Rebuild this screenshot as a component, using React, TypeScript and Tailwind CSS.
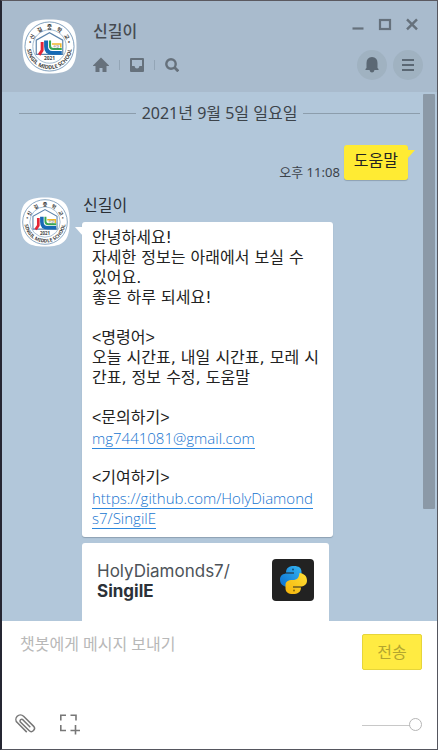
import React from "react";

function SchoolEmblem({ id, className }: { id: string; className: string }) {
  return (
    <svg viewBox="0 0 56 56" className={className} role="img" aria-label="신길중학교">
      <defs>
        <path id={`${id}-top`} d="M9.5 29 A18.5 18.5 0 0 1 46.5 29" />
        <path id={`${id}-bottom`} d="M5 28 A23 23 0 0 0 51 28" />
      </defs>
      <path
        d="M28 0.500C49 0.500 55.500 7 55.500 28S49 55.500 28 55.500S0.500 49 0.500 28S7 0.500 28 0.500Z"
        fill="#fff"
      />
      <circle cx="28" cy="28" r="25" fill="none" stroke="#6f93b5" strokeWidth="0.900" />
      <circle cx="28" cy="28" r="17" fill="none" stroke="#8aa9c6" strokeWidth="0.800" />
      <path d="M14.500 36V21.500L28 14L41.500 21.500V36Z" fill="#fff" stroke="#5b83ab" strokeWidth="1.200" />
      <path d="M17.500 36.500L20.500 32V23.500" fill="none" stroke="#e32636" strokeWidth="3" />
      <path d="M24.500 22V28Q24.500 34.500 31 34.500H40.500" fill="none" stroke="#1769b5" strokeWidth="4" />
      <path d="M28.500 22V27.500Q28.500 30.500 32 30.500H40.500" fill="none" stroke="#36a853" strokeWidth="2.200" />
      <path d="M30.500 25.500H39.500V29" fill="none" stroke="#efb72d" strokeWidth="1.600" />
      <text x="35" y="29.500" textAnchor="middle" fontSize="3.500" fill="#555">신길</text>
      <text x="28" y="42" textAnchor="middle" fontSize="5" fontWeight="700" fill="#444">2021</text>
      <text fontSize="5.500" fontWeight="700" fill="#333">
        <textPath href={`#${id}-top`} startOffset="50%" textAnchor="middle">
          {"•\u00a0신\u00a0\u00a0\u00a0길\u00a0\u00a0\u00a0중\u00a0\u00a0\u00a0학\u00a0\u00a0\u00a0교\u00a0•"}
        </textPath>
      </text>
      <text fontSize="5.500" fontWeight="700" fill="#444">
        <textPath href={`#${id}-bottom`} startOffset="50%" textAnchor="middle">SINGIL MIDDLE SCHOOL</textPath>
      </text>
    </svg>
  );
}

function PythonMark() {
  const half =
    "M14 14C14 8.500 17.500 7 22 7C27 7 29.500 9 29.500 13V16C29.500 19.500 27 21 22.500 21C17.500 21 16 23.500 15.500 28C11 27.500 8 25 8 20.500C8 16.500 11 14.500 15 14.500H22V13.500H14Z";
  return (
    <svg viewBox="0 0 42 42" className="size-[42px] shrink-0" role="img" aria-label="Python">
      <defs>
        <linearGradient id="py-blue" x1="0" y1="1" x2="1" y2="0">
          <stop offset="0" stopColor="#0a6fd0" />
          <stop offset="1" stopColor="#35b5f2" />
        </linearGradient>
        <linearGradient id="py-yellow" x1="0" y1="1" x2="1" y2="0">
          <stop offset="0" stopColor="#ffdf35" />
          <stop offset="1" stopColor="#f5b30b" />
        </linearGradient>
      </defs>
      <rect width="42" height="42" rx="4" fill="#222" />
      <path d={half} fill="url(#py-blue)" />
      <path d={half} fill="url(#py-yellow)" transform="rotate(180 21.500 21)" />
      <circle cx="21" cy="10.500" r="1" fill="#13507f" />
      <circle cx="22" cy="31.500" r="1" fill="#8b6c08" />
    </svg>
  );
}

function IconButton({ label, className = "", children }: { label: string; className?: string; children: React.ReactNode }) {
  return (
    <button type="button" aria-label={label} className={`flex items-center justify-center ${className}`}>
      {children}
    </button>
  );
}

function Header() {
  return (
    <header className="flex h-[91px] shrink-0 justify-between bg-[#a9bbcd] pl-5 text-[#66717c]">
      <div className="flex pt-[18px]">
        <SchoolEmblem id="header" className="size-[55px]" />
        <div className="ml-4">
          <h1 className="text-base leading-6 font-medium text-[#464b52]">신길이</h1>
          <nav className="mt-3 flex h-5 items-center">
            <IconButton label="홈" className="size-4">
              <svg viewBox="0 0 16 16" className="size-4" fill="currentColor">
                <path d="M8 0.500L0 8.500V9H2.500V15H6.500V11H9.500V15H13.500V9H16V8.500Z" />
              </svg>
            </IconButton>
            <span className="mx-[10px] h-[10px] w-px bg-[#93a5b6]" />
            <IconButton label="보관함" className="size-[14px]">
              <svg viewBox="0 0 14 14" className="size-[14px]" fill="currentColor">
                <path
                  fillRule="evenodd"
                  d="M1 0H13Q14 0 14 1V13Q14 14 13 14H1Q0 14 0 13V1Q0 0 1 0ZM2 2V8H4.500Q5 10.500 7 10.500T9.500 8H12V2Z"
                />
              </svg>
            </IconButton>
            <span className="mx-[10px] h-[10px] w-px bg-[#93a5b6]" />
            <IconButton label="검색" className="size-[14px]">
              <svg viewBox="0 0 14 14" className="size-[14px]" fill="none" stroke="currentColor" strokeWidth="2.400">
                <circle cx="6" cy="6" r="4.700" />
                <path d="M9.300 9.300L13.300 13.300" strokeWidth="2.800" />
              </svg>
            </IconButton>
          </nav>
        </div>
      </div>
      <div className="flex flex-col items-end pt-4 pr-[14px]">
        <div className="mr-[5px] flex gap-[14px]">
          <IconButton label="최소화" className="h-4 w-3">
            <svg viewBox="0 0 12 16" className="h-4 w-3">
              <path d="M0.500 11.500H11.500" stroke="currentColor" strokeWidth="2.200" />
            </svg>
          </IconButton>
          <IconButton label="최대화" className="h-4 w-[14px]">
            <svg viewBox="0 0 14 16" className="h-4 w-[14px]">
              <rect x="2" y="3" width="10" height="9" fill="none" stroke="currentColor" strokeWidth="2.200" />
            </svg>
          </IconButton>
          <IconButton label="닫기" className="h-4 w-3">
            <svg viewBox="0 0 12 16" className="h-4 w-3">
              <path d="M1 2.300L11 12.300M11 2.300L1 12.300" stroke="currentColor" strokeWidth="2.400" />
            </svg>
          </IconButton>
        </div>
        <div className="mt-[17px] flex gap-[6px] text-[#5b6874]">
          <IconButton label="알림" className="size-[30px] rounded-full bg-[#a0b2c1]">
            <svg viewBox="0 0 14 16" className="h-4 w-[14px]" fill="currentColor">
              <path d="M7 0Q12.500 0.500 12.500 6V11L13.500 12V13H9.500Q9 15.500 7 15.500T4.500 13H0.500V12L1.500 11V6Q1.500 0.500 7 0Z" />
            </svg>
          </IconButton>
          <IconButton label="메뉴" className="size-[30px] rounded-full bg-[#a0b2c1]">
            <svg viewBox="0 0 12 12" className="size-3">
              <path d="M0 1H12M0 6H12M0 11H12" stroke="currentColor" strokeWidth="2" />
            </svg>
          </IconButton>
        </div>
      </div>
    </header>
  );
}

function LinkLine({ href, children }: { href: string; children: React.ReactNode }) {
  return (
    <p className="font-['Open_Sans','Noto_Sans_CJK_KR',sans-serif] text-[15px] leading-5 font-light">
      <a href={href} className="border-b border-[#2c86dc] text-[#1674d0]">
        {children}
      </a>
    </p>
  );
}

function SectionTitle({ children }: { children: React.ReactNode }) {
  return (
    <p className="mt-5 font-['Liberation_Sans','Noto_Sans_CJK_KR',sans-serif]">&lt;{children}&gt;</p>
  );
}

function Chat() {
  return (
    <main className="relative min-h-0 flex-1 overflow-hidden bg-[#b2c7da] px-[17px] pt-[11px]">
      <div className="flex items-center gap-[6px] text-base leading-5 text-[#3c434a]">
        <span className="h-px flex-1 bg-[#8c9dac]" />
        <time dateTime="2021-09-05">2021년 9월 5일 일요일</time>
        <span className="h-px flex-1 bg-[#8c9dac]" />
      </div>

      <div className="mt-[22px] mr-3 flex items-end justify-end gap-1">
        <time dateTime="23:08" className="text-[13px] leading-4 text-[#3c434a]">오후 11:08</time>
        <div className="relative rounded-[3px] bg-[#ffeb33] px-[10px] pt-[5px] pb-[10px] text-base leading-5 text-[#222] shadow-[0_1px_1px_#8da0b2]">
          도움말
          <svg viewBox="0 0 8 10" className="absolute top-[5px] -right-[7px] h-[10px] w-2" fill="#ffeb33">
            <path d="M0 0H8L0 9Z" />
          </svg>
        </div>
      </div>

      <article className="mt-[17px] ml-px flex">
        <SchoolEmblem id="sender" className="size-[50px] shrink-0" />
        <div className="ml-3 min-w-0">
          <h2 className="h-[25px] pl-px text-base leading-4 font-normal text-[#2b3036]">신길이</h2>
          <div className="relative w-[251px] rounded-[3px] bg-white px-[10px] pt-[6px] pb-[9px] font-['DejaVu_Sans','Noto_Sans_CJK_KR',sans-serif] text-base leading-5 text-[#222] shadow-[0_1px_1px_#8da0b2]">
            <svg viewBox="0 0 8 10" className="absolute top-[5px] -left-[7px] h-[10px] w-2" fill="#fff">
              <path d="M8 0H0L8 9Z" />
            </svg>
            <p>안녕하세요!</p>
            <p>자세한 정보는 아래에서 보실 수<br />있어요.</p>
            <p>좋은 하루 되세요!</p>
            <SectionTitle>명령어</SectionTitle>
            <p>오늘 시간표, 내일 시간표, 모레 시<br />간표, 정보 수정, 도움말</p>
            <SectionTitle>문의하기</SectionTitle>
            <LinkLine href="mailto:mg7441081@gmail.com">mg7441081@gmail.com</LinkLine>
            <SectionTitle>기여하기</SectionTitle>
            <LinkLine href="https://github.com/HolyDiamonds7/SingilE">
              https://github.com/HolyDiamond<br />s7/SingilE
            </LinkLine>
          </div>
          <div className="mt-[6px] flex h-[125px] w-[247px] justify-between rounded-t-[3px] bg-white pt-4 pr-[15px] pl-[15px]">
            <p className="pt-[2px] font-['Inter',sans-serif] text-[17px] leading-5 text-[#4d5359]">
              HolyDiamonds7/<br />
              <strong className="font-bold text-[#2b3138]">SingilE</strong>
            </p>
            <PythonMark />
          </div>
        </div>
      </article>

      <div className="absolute top-[2px] right-[2px] h-[415px] w-3 rounded-[1px] bg-[#8b99a7]" />
    </main>
  );
}

function Composer() {
  return (
    <form className="flex h-[128px] shrink-0 flex-col justify-between bg-white pt-[13px] pr-[15px] pl-3" onSubmit={(e) => e.preventDefault()}>
      <div className="flex items-start justify-between">
        <textarea
          aria-label="메시지"
          placeholder="챗봇에게 메시지 보내기"
          className="h-[60px] min-w-0 flex-1 resize-none pl-[6px] text-base leading-5 outline-none placeholder:text-[#b8b8b8]"
        />
        <button type="submit" className="h-[36px] w-[60px] rounded-[2px] border border-[#e6d53a] bg-[#ffeb42] text-base leading-5 text-[#b3a52f]">
          전송
        </button>
      </div>
      <div className="mb-[14px] flex items-center gap-6 text-[#777]">
        <IconButton label="파일 첨부" className="size-[22px]">
          <svg viewBox="-11 -11 22 22" className="size-[22px]" fill="none" stroke="currentColor" strokeWidth="1.500">
            <path
              transform="rotate(-45)"
              d="M-4.500 7V-6.500A4.500 4.500 0 0 1 4.500 -6.500V7.500A3 3 0 0 1 -1.800 7.500V-5A1.800 1.800 0 0 1 1.500 -5V6"
            />
          </svg>
        </IconButton>
        <IconButton label="화면 캡처" className="size-[22px]">
          <svg viewBox="0 0 22 22" className="size-[22px]" fill="none" stroke="currentColor" strokeWidth="1.600">
            <path d="M0.800 7.500V2.300H6M10.500 2.300H16V7.500M0.800 12V17.500H6M15.500 12V21.500M10.500 17.500H20" />
          </svg>
        </IconButton>
        <input
          type="range"
          aria-label="투명도"
          defaultValue={100}
          className="ml-auto h-[13px] w-[60px] appearance-none bg-[linear-gradient(#c8c8c8,#c8c8c8)] bg-[length:48px_1px] bg-[position:0_7px] bg-no-repeat [&::-webkit-slider-thumb]:size-[13px] [&::-webkit-slider-thumb]:appearance-none [&::-webkit-slider-thumb]:rounded-full [&::-webkit-slider-thumb]:border [&::-webkit-slider-thumb]:border-[#b5b5b5] [&::-webkit-slider-thumb]:bg-white"
        />
      </div>
    </form>
  );
}

export default function App() {
  return (
    <div className="flex h-screen flex-col border-t border-r border-b border-l-2 border-t-[#5b5960] border-r-[#55565e] border-b-[#55565e] border-l-[#252632] font-['Noto_Sans','Noto_Sans_CJK_KR',sans-serif]">
      <Header />
      <Chat />
      <Composer />
    </div>
  );
}
